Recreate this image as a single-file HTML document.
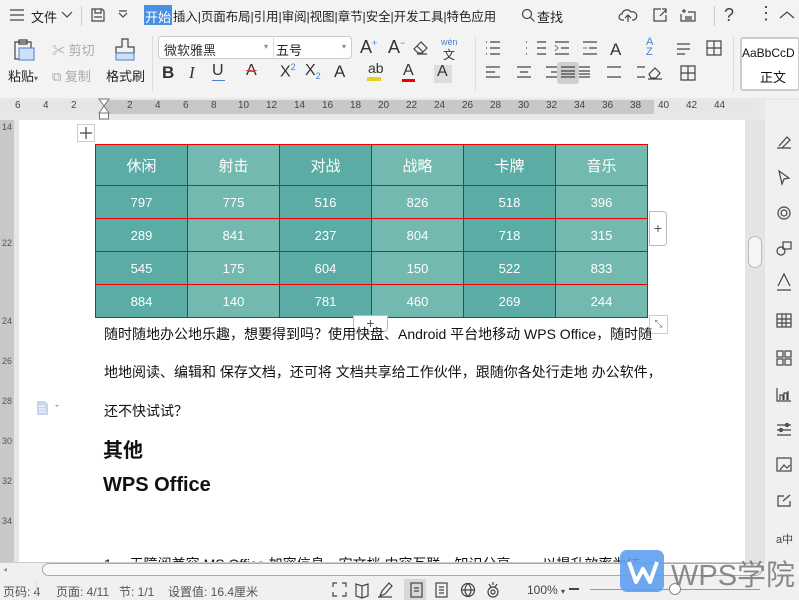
<!DOCTYPE html>
<html><head><meta charset="utf-8"><style>
*{margin:0;padding:0;box-sizing:border-box}
body{width:799px;height:600px;overflow:hidden;position:relative;background:#f3f3f3;font-family:"Liberation Sans","Noto Sans CJK SC",sans-serif;color:#333}
.a{position:absolute;white-space:nowrap}
.t{font-size:13px;color:#222}
.g{color:#aaa}
svg{position:absolute;overflow:visible}
.ic{fill:none;stroke:#444;stroke-width:1.2}
table{border-collapse:collapse;position:absolute;left:95px;top:144px;width:553px;table-layout:fixed}
td{border:1px solid #e00;color:#fff;text-align:center;font-size:13px;height:33px}
td.d{background:#5aaca4}td.l{background:#74b9af}
tr.h td{height:41px;font-size:15px}
.p{font-size:14px;color:#111;position:absolute;left:104px;white-space:nowrap}
</style></head><body>
<div class="a" style="left:0;top:0;width:799px;height:32px;background:#f3f3f3"></div>
<svg style="left:10px;top:9px" width="14" height="12"><path class="ic" d="M0 1h14M0 6h14M0 11h14"/></svg>
<div class="a t" style="left:31px;top:7px">文件</div>
<svg style="left:62px;top:12px" width="10" height="6"><path class="ic" d="M0 0l5 5 5-5"/></svg>
<div class="a" style="left:81px;top:6px;width:1px;height:20px;background:#ccc"></div>
<svg style="left:91px;top:8px" width="14" height="14"><path class="ic" d="M1 1h10l2 2v10h-12zM4 1v4h6V1M3 9h8"/></svg>
<svg style="left:119px;top:13px" width="8" height="5"><path class="ic" d="M0 0l4 4 4-4M0 -2h8"/></svg>
<div class="a" style="left:144px;top:5px;width:28px;height:20px;background:#4a8fe0"></div>
<div class="a" style="left:145px;top:7px;color:#fff;font-size:13px">开始</div>
<div class="a" style="left:173px;top:7px;font-size:12.4px;color:#222">插入|页面布局|引用|审阅|视图|章节|安全|开发工具|特色应用</div>
<svg style="left:521px;top:8px" width="14" height="14"><circle class="ic" cx="6" cy="6" r="4.5"/><path class="ic" d="M9.5 9.5l4 4"/></svg>
<div class="a t" style="left:537px;top:7px">查找</div>
<svg style="left:619px;top:7px" width="20" height="16"><path class="ic" d="M5 13H3a3 3 0 010-6 5 5 0 019-2 4 4 0 013 8h-2M9 15V8M6 11l3-3 3 3"/></svg>
<svg style="left:653px;top:8px" width="14" height="14"><path class="ic" d="M8 1H1v12h12V7M7 8l6-6M9 1h4v4"/></svg>
<svg style="left:680px;top:8px" width="16" height="14"><path class="ic" d="M4 1v4M2 3h4M1 6v7h14V4H8M5 9h7M5 11h7"/></svg>
<div class="a" style="left:714px;top:6px;width:1px;height:20px;background:#ccc"></div>
<div class="a" style="left:724px;top:5px;font-size:18px;color:#444">?</div>
<div class="a" style="left:757px;top:3px;font-size:18px;color:#444">⋮</div>
<svg style="left:780px;top:11px" width="14" height="8"><path class="ic" d="M0 7l7-6 7 6"/></svg>
<svg style="left:12px;top:39px" width="24" height="24"><path class="ic" d="M3 3h16v17H3zM7 1h8v4H7z"/><rect x="7" y="9" width="15" height="12" fill="#cfe0f6" stroke="#4a7fd0"/></svg>
<div class="a t" style="left:8px;top:66px">粘贴<span style="font-size:8px;color:#666">▾</span></div>
<div class="a t g" style="left:52px;top:40px">✂ 剪切</div>
<div class="a t g" style="left:52px;top:66px">⧉ 复制</div>
<svg style="left:114px;top:38px" width="22" height="24"><path class="ic" d="M8 1h6v8h6v6H2V9h6z"/><rect x="2" y="15" width="18" height="7" fill="#cfe0f6" stroke="#4a7fd0"/></svg>
<div class="a t" style="left:106px;top:66px">格式刷</div>
<div class="a" style="left:152px;top:36px;width:1px;height:56px;background:#ddd"></div>
<div class="a" style="left:158px;top:36px;width:194px;height:23px;border:1px solid #ccc;border-radius:4px;background:#fff"></div>
<div class="a" style="left:273px;top:37px;width:1px;height:21px;background:#ddd"></div>
<div class="a t" style="left:164px;top:40px;color:#333">微软雅黑</div>
<div class="a t" style="left:276px;top:40px">五号</div>
<div class="a" style="left:264px;top:42px;font-size:8px;color:#888">▾</div>
<div class="a" style="left:342px;top:42px;font-size:8px;color:#888">▾</div>
<div class="a" style="left:360px;top:37px;font-size:18px;color:#333">A<sup style="font-size:9px;color:#4a7fd0">+</sup></div>
<div class="a" style="left:388px;top:37px;font-size:18px;color:#333">A<sup style="font-size:9px;color:#4a7fd0">−</sup></div>
<svg style="left:413px;top:40px" width="16" height="15"><path class="ic" d="M1 9l7-7 6 6-5 5H5zM4 6l6 6M4 14h10"/></svg>
<div class="a" style="left:441px;top:37px;font-size:9px;color:#4a7fd0">wén</div>
<div class="a" style="left:443px;top:46px;font-size:12px">文</div>
<div class="a" style="left:162px;top:63px;font-size:17px;font-weight:bold">B</div>
<div class="a" style="left:189px;top:63px;font-size:17px;font-style:italic;font-family:'Liberation Serif',serif">I</div>
<div class="a" style="left:212px;top:62px;font-size:16px">U</div><div class="a" style="left:212px;top:80px;width:13px;height:1px;background:#4a7fd0"></div>
<div class="a" style="left:246px;top:62px;font-size:16px;text-decoration:line-through;text-decoration-color:#c44">A</div>
<div class="a" style="left:280px;top:62px;font-size:16px">X<sup style="font-size:9px;color:#4a7fd0">2</sup></div>
<div class="a" style="left:305px;top:62px;font-size:16px">X<sub style="font-size:9px;color:#4a7fd0">2</sub></div>
<div class="a" style="left:334px;top:62px;font-size:17px">A</div>
<div class="a" style="left:368px;top:60px;font-size:14px">ab</div><div class="a" style="left:367px;top:77px;width:14px;height:4px;background:#e8d020"></div>
<div class="a" style="left:403px;top:62px;font-size:16px">A</div><div class="a" style="left:402px;top:79px;width:13px;height:3px;background:#e00"></div>
<div class="a" style="left:434px;top:65px;width:18px;height:18px;background:#ddd"></div><div class="a" style="left:437px;top:63px;font-size:16px">A</div>
<div class="a" style="left:475px;top:36px;width:1px;height:56px;background:#ddd"></div>
<svg style="left:486px;top:41px" width="60" height="14"><path class="ic" d="M4 1h10M4 7h10M4 13h10M51 1h9M51 7h9M51 13h9"/><path class="ic" d="M0 1h1M0 7h1M0 13h1M40 1h1M40 7h1M40 13h1"/></svg>
<svg style="left:486px;top:67px" width="150" height="12"><path class="ic" d="M0 0h14M0 5h9M0 10h14M31 0h14M34 5h8M31 10h14M60 0h14M65 5h9M60 10h14M90 0h14M90 4h14M90 7h14M90 10h14M121 0h14M121 10h14M151 0h8M151 10h8"/></svg>
<div class="a" style="left:557px;top:62px;width:22px;height:22px;background:#cfcfcf;border-radius:3px"></div>
<svg style="left:561px;top:67px" width="14" height="12"><path class="ic" d="M0 0h14M0 4h14M0 7h14M0 10h14"/></svg>
<svg style="left:555px;top:41px" width="16" height="14"><path class="ic" d="M0 1h14M6 7h8M0 13h14" /><path d="M0 4l3 3-3 3" stroke="#4a7fd0" fill="none"/></svg>
<svg style="left:583px;top:41px" width="16" height="14"><path class="ic" d="M0 1h14M6 7h8M0 13h14" /><path d="M0 7h4" stroke="#4a7fd0" fill="none"/></svg>
<div class="a" style="left:610px;top:40px;font-size:17px">A</div>
<div class="a" style="left:646px;top:37px;font-size:11px;color:#4a7fd0;line-height:10px">A<br>Z</div>
<svg style="left:676px;top:41px" width="16" height="14"><path class="ic" d="M1 3h13M1 8h13M1 13h8"/></svg>
<svg style="left:706px;top:40px" width="16" height="16"><path class="ic" d="M1 1h14v14H1zM8 1v14M1 8h14"/></svg>
<svg style="left:647px;top:66px" width="18" height="14"><path class="ic" d="M2 8l6-6 5 5-4 5H4zM1 13h14"/></svg>
<svg style="left:680px;top:65px" width="16" height="16"><path class="ic" d="M1 1h14v14H1zM8 1v14M1 8h14"/></svg>
<div class="a" style="left:733px;top:36px;width:1px;height:56px;background:#ddd"></div>
<div class="a" style="left:740px;top:37px;width:60px;height:54px;background:#fff;border:2px solid #ccc;border-radius:3px"></div>
<div class="a" style="left:742px;top:46px;font-size:12px;color:#111">AaBbCcD</div>
<div class="a t" style="left:760px;top:67px;color:#111">正文</div>
<div class="a" style="left:0;top:98px;width:799px;height:22px;background:#e8e8e8"></div>
<div class="a" style="left:0;top:100px;width:104px;height:14px;background:#e6e6e6"></div>
<div class="a" style="left:104px;top:100px;width:550px;height:14px;background:#c8c8c8"></div>
<div class="a" style="left:654px;top:100px;width:96px;height:14px;background:#e6e6e6"></div>
<div class="a" style="left:0;top:100px;font-size:10px;color:#444">
<span class="a" style="left:15px">6</span><span class="a" style="left:43px">4</span><span class="a" style="left:71px">2</span>
<span class="a" style="left:127px">2</span><span class="a" style="left:155px">4</span><span class="a" style="left:183px">6</span><span class="a" style="left:211px">8</span><span class="a" style="left:238px">10</span><span class="a" style="left:266px">12</span><span class="a" style="left:294px">14</span><span class="a" style="left:322px">16</span><span class="a" style="left:350px">18</span><span class="a" style="left:378px">20</span><span class="a" style="left:406px">22</span><span class="a" style="left:434px">24</span><span class="a" style="left:462px">26</span><span class="a" style="left:490px">28</span><span class="a" style="left:518px">30</span><span class="a" style="left:546px">32</span><span class="a" style="left:574px">34</span><span class="a" style="left:602px">36</span><span class="a" style="left:630px">38</span><span class="a" style="left:658px">40</span><span class="a" style="left:686px">42</span><span class="a" style="left:714px">44</span>
</div>
<svg style="left:99px;top:99px" width="10" height="20"><path d="M0 0h10L5 7 10 14H0L5 7z" fill="#fff" stroke="#777"/><rect x="0.5" y="14" width="9" height="6" fill="#fff" stroke="#777"/></svg>
<div class="a" style="left:0;top:120px;width:18px;height:442px;background:#c8c8c8"></div>
<div class="a" style="left:14px;top:120px;width:5px;height:442px;background:#e6e6e6"></div>
<div class="a" style="left:19px;top:120px;width:726px;height:442px;background:#fff"></div>
<div class="a" style="left:745px;top:120px;width:20px;height:442px;background:#e4e4e4"></div>
<div class="a" style="left:748px;top:236px;width:14px;height:32px;background:#f6f6f6;border:1px solid #bbb;border-radius:7px"></div>
<div class="a" style="left:765px;top:100px;width:34px;height:462px;background:#f0f0f0"></div>
<div class="a" style="left:0;top:120px;font-size:9px;color:#555">
<span class="a" style="left:2px;top:2px">14</span><span class="a" style="left:2px;top:118px">22</span><span class="a" style="left:2px;top:196px">24</span><span class="a" style="left:2px;top:236px">26</span><span class="a" style="left:2px;top:276px">28</span><span class="a" style="left:2px;top:316px">30</span><span class="a" style="left:2px;top:356px">32</span><span class="a" style="left:2px;top:396px">34</span>
</div>
<svg style="left:776px;top:134px" width="16" height="410"><g class="ic">
<path d="M1 14h14M3 12l8-9 3 3-8 8"/>
<path d="M3 37l10 7-5 1-2 5z"/>
<circle cx="8" cy="79" r="6"/><circle cx="8" cy="79" r="3"/>
<circle cx="5" cy="117" r="4"/><rect x="7" y="108" width="8" height="7"/>
<path d="M2 152l6-12 6 12M1 156h14"/>
<rect x="1" y="180" width="14" height="13"/><path d="M1 185h14M1 189h14M6 180v13M10 180v13"/>
<rect x="1" y="217" width="6" height="6"/><rect x="9" y="217" width="6" height="6"/><rect x="1" y="225" width="6" height="6"/><rect x="9" y="225" width="6" height="6"/>
<path d="M1 254v13h14M4 266v-5h3v5M8 266v-7h3v7M12 266v-9"/>
<path d="M1 291h14M1 296h14M1 301h14"/><circle cx="11" cy="291" r="1.5"/><circle cx="5" cy="296" r="1.5"/>
<rect x="1" y="324" width="14" height="13"/><path d="M4 336l4-5 3 3 3-3"/>
<path d="M8 362H2v10h12v-5M7 367l7-6"/>
<text x="0" y="409" font-size="11" fill="#444" stroke="none">a中</text>
</g></svg>
<svg style="left:77px;top:124px" width="18" height="18"><rect x="0.5" y="0.5" width="17" height="17" fill="#fff" stroke="#ccc"/><path class="ic" d="M9 3v12M3 9h12"/></svg>
<table>
<tr class="h"><td class="d">休闲</td><td class="l">射击</td><td class="d">对战</td><td class="l">战略</td><td class="d">卡牌</td><td class="l">音乐</td></tr>
<tr><td class="d">797</td><td class="l">775</td><td class="d">516</td><td class="l">826</td><td class="d">518</td><td class="l">396</td></tr>
<tr><td class="d">289</td><td class="l">841</td><td class="d">237</td><td class="l">804</td><td class="d">718</td><td class="l">315</td></tr>
<tr><td class="d">545</td><td class="l">175</td><td class="d">604</td><td class="l">150</td><td class="d">522</td><td class="l">833</td></tr>
<tr><td class="d">884</td><td class="l">140</td><td class="d">781</td><td class="l">460</td><td class="d">269</td><td class="l">244</td></tr>
</table>
<div class="a" style="left:649px;top:211px;width:18px;height:35px;background:#fff;border:1px solid #bbb;border-radius:0 4px 4px 0;font-size:14px;color:#555;text-align:center;line-height:33px">+</div>
<div class="a" style="left:353px;top:315px;width:35px;height:17px;background:#fff;border:1px solid #bbb;border-radius:0 0 4px 4px;font-size:14px;color:#555;text-align:center;line-height:14px">+</div>
<div class="a" style="left:649px;top:315px;width:19px;height:19px;background:#fff;border:1px solid #ccc;font-size:10px;color:#777;text-align:center;line-height:17px">⤡</div>
<div class="p" style="top:324px">随时随地办公地乐趣，想要得到吗？使用快盘、Android 平台地移动 WPS Office，随时随</div>
<div class="p" style="top:362px">地地阅读、编辑和  保存文档，还可将  文档共享给工作伙伴，跟随你各处行走地  办公软件，</div>
<div class="p" style="top:401px">还不快试试？</div>
<svg style="left:37px;top:401px" width="24" height="14"><path d="M0 0h8l3 3v11H0z" fill="#c5d5ea"/><path d="M2 5h6M2 8h7M2 11h7" stroke="#fff"/><path d="M20 6l-2-2h4z" fill="#999"/></svg>
<div class="a" style="left:103px;top:434px;font-size:20px;font-weight:bold;color:#111">其他</div>
<div class="a" style="left:103px;top:474px;font-size:20px;font-weight:bold;color:#111">WPS Office</div>
<div class="a" style="left:104px;top:555px;height:7px;overflow:hidden;font-size:14px;color:#111;line-height:18px">1、 无障阅兼容  MS  Office 加密信息、宏文档  内容互联、知识分享……  以提升效率为核</div>
<div class="a" style="left:0;top:562px;width:765px;height:16px;background:#f0f0f0;border-top:1px solid #ccc"></div>
<div class="a" style="left:42px;top:563px;width:720px;height:13px;background:#f8f8f8;border:1px solid #aaa;border-radius:7px"></div>
<div class="a" style="left:3px;top:565px;font-size:8px;color:#999">◂</div>
<div class="a" style="left:0;top:578px;width:799px;height:22px;background:#f0f0f0"></div>
<div class="a" style="left:3px;top:583px;font-size:12px;color:#555">页码: 4</div>
<div class="a" style="left:36px;top:580px;width:1px;height:18px;background:#ddd"></div>
<div class="a" style="left:56px;top:583px;font-size:12px;color:#555">页面: 4/11</div>
<div class="a" style="left:119px;top:583px;font-size:12px;color:#555">节: 1/1</div>
<div class="a" style="left:168px;top:583px;font-size:12px;color:#555">设置值: 16.4厘米</div>
<div class="a" style="left:404px;top:579px;width:22px;height:21px;background:#d8d8d8"></div>
<svg style="left:332px;top:582px" width="160" height="15"><g class="ic">
<path d="M1 5V1h4M10 1h4v4M14 10v4h-4M5 14H1v-4"/>
<path d="M24 2l6 2 6-2v12l-6 2-6-2zM30 4v12"/>
<path d="M48 14l2-5 7-8 3 3-7 8zM46 15h14"/>
<rect x="79" y="1" width="11" height="14"/><path d="M82 6h5M82 9h5"/>
<rect x="104" y="1" width="11" height="14"/><path d="M107 5h5M107 8h5M107 11h5"/>
<circle cx="136" cy="8" r="6.5"/><path d="M129.5 8h13M136 1.5c-4 4-4 9 0 13M136 1.5c4 4 4 9 0 13"/>
<circle cx="161" cy="10" r="5"/><circle cx="161" cy="10" r="2"/><path d="M157 2l2 3M165 2l-2 3M161 0v3"/>
</g></svg>
<div class="a" style="left:527px;top:583px;font-size:12px;color:#444">100% <span style="font-size:8px">▾</span></div>
<div class="a" style="left:569px;top:588px;width:10px;height:2px;background:#444"></div>
<div class="a" style="left:590px;top:589px;width:170px;height:1px;background:#999"></div>
<div class="a" style="left:669px;top:583px;width:12px;height:12px;border-radius:50%;background:#fff;border:1px solid #888"></div>
<div class="a" style="left:620px;top:550px;width:44px;height:42px;background:#5e9ff0;border-radius:7px;opacity:.9"></div>
<svg style="left:627px;top:560px" width="32" height="26"><path d="M2 2l7 20 7-13 7 13 7-20" fill="none" stroke="#fff" stroke-width="4" stroke-linejoin="round"/></svg>
<div class="a" style="left:671px;top:552px;font-size:29px;color:#777;opacity:.85">WPS学院</div>
</body></html>
